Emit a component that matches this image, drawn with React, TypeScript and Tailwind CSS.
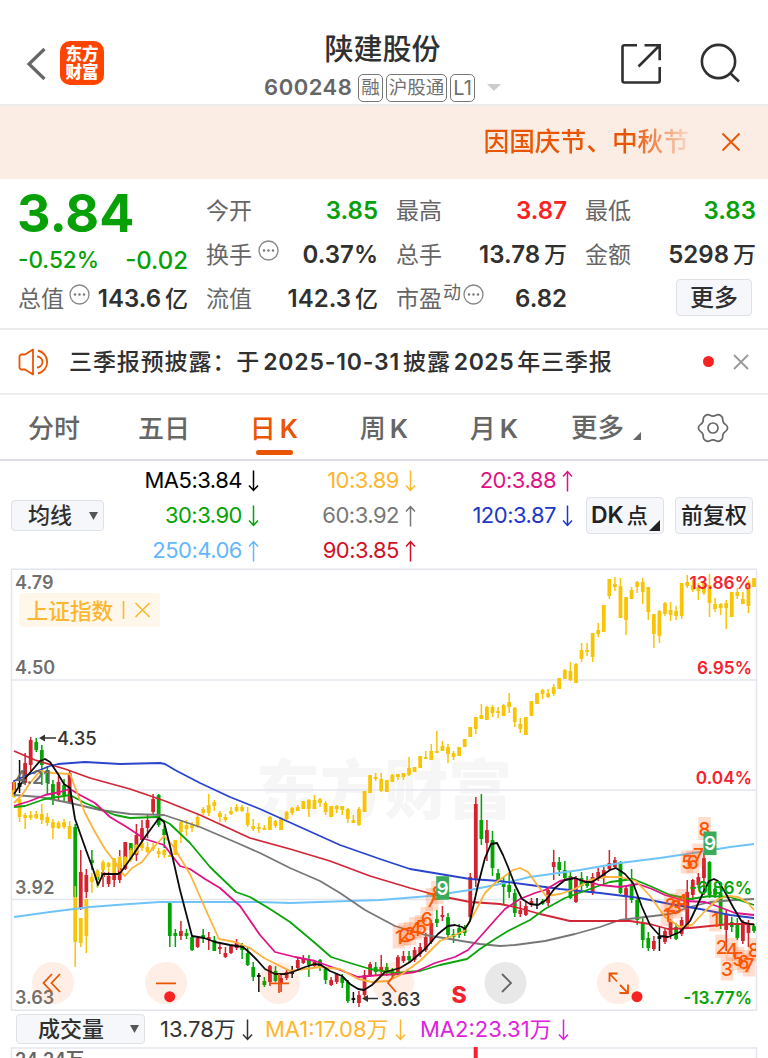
import React from 'react';
import { clsx } from 'clsx';

type Tone = 'up' | 'down' | 'flat';
type Bar = [high: number, top: number, bottom: number, low: number];

const RED = '#d2232e';
const GREEN = '#04a404';
const BLACK = '#111111';
const YELLOW = '#f9c406';

const FIRST_X = 14;
const STEP = 5.564;

const indexBars: Bar[] = [
  [782, 790, 797, 798], [798, 799, 817, 822], [813, 815, 818, 829], [811, 815, 818, 820], [811, 814, 818, 819],
  [804, 814, 820, 824], [813, 817, 823, 826], [819, 822, 828, 839], [821, 823, 828, 829], [819, 822, 827, 829],
  [821, 826, 839, 839], [886, 897, 942, 967], [918, 918, 943, 947], [899, 899, 936, 953], [873, 877, 882, 893],
  [869, 871, 877, 888], [860, 862, 870, 877], [862, 863, 867, 872], [858, 858, 873, 874], [856, 857, 868, 869],
  [856, 857, 865, 865], [848, 850, 860, 862], [844, 845, 853, 854], [842, 843, 848, 851], [842, 847, 852, 853],
  [843, 847, 849, 851], [848, 851, 854, 858], [849, 850, 855, 858], [852, 855, 857, 857], [840, 840, 855, 855],
  [820, 822, 832, 843], [820, 825, 829, 836], [822, 825, 828, 832], [815, 817, 827, 828], [807, 809, 813, 815],
  [794, 805, 813, 816], [800, 802, 806, 811], [811, 813, 817, 822], [814, 817, 820, 822], [807, 811, 814, 815],
  [804, 807, 811, 812], [805, 807, 811, 812], [807, 813, 825, 827], [819, 826, 829, 831], [823, 827, 829, 833],
  [825, 828, 830, 830], [816, 817, 830, 830], [820, 821, 826, 828], [817, 818, 830, 830], [811, 812, 819, 820],
  [807, 808, 813, 815], [805, 807, 811, 811], [801, 801, 809, 809], [799, 800, 809, 817], [795, 800, 809, 809],
  [798, 799, 803, 807], [801, 803, 812, 815], [806, 806, 817, 817], [805, 806, 809, 813], [806, 806, 810, 815],
  [808, 809, 819, 823], [815, 820, 823, 823], [807, 809, 825, 826], [791, 791, 812, 812], [775, 775, 793, 793],
  [773, 777, 779, 781], [773, 779, 791, 792], [780, 780, 792, 792], [774, 775, 782, 782], [774, 774, 777, 780],
  [773, 773, 777, 780], [757, 768, 775, 776], [767, 767, 772, 772], [756, 756, 768, 768], [751, 757, 759, 759],
  [744, 751, 760, 760], [731, 751, 753, 753], [741, 746, 751, 751], [744, 747, 754, 763], [751, 753, 757, 760],
  [747, 747, 756, 756], [739, 739, 747, 747], [727, 727, 737, 737], [717, 717, 729, 734], [704, 715, 719, 719],
  [706, 707, 720, 720], [705, 707, 713, 717], [707, 711, 713, 718], [704, 705, 716, 716], [693, 702, 707, 713],
  [707, 708, 722, 727], [718, 724, 729, 733], [717, 717, 735, 735], [701, 701, 716, 716], [693, 693, 704, 704],
  [689, 690, 694, 699], [689, 693, 697, 698], [684, 687, 694, 696], [678, 678, 689, 689], [669, 670, 679, 679],
  [662, 671, 680, 681], [663, 664, 683, 683], [643, 650, 659, 662], [643, 650, 652, 656], [633, 633, 657, 662],
  [623, 630, 634, 637], [605, 605, 632, 632], [579, 579, 596, 599], [577, 584, 587, 591], [578, 586, 618, 618],
  [597, 597, 620, 635], [587, 590, 599, 599], [581, 582, 587, 593], [578, 582, 592, 604], [587, 587, 612, 620],
  [614, 614, 634, 648], [610, 611, 636, 643], [602, 603, 614, 616], [602, 610, 615, 621], [606, 611, 616, 620],
  [583, 583, 616, 619], [575, 582, 586, 588], [580, 585, 590, 592], [583, 587, 591, 600], [580, 582, 593, 595],
  [574, 585, 603, 617], [598, 604, 609, 612], [603, 604, 608, 615], [600, 603, 608, 629], [592, 592, 617, 617],
  [588, 592, 596, 599], [592, 599, 604, 604], [580, 582, 606, 613], [578, 578, 587, 587],
];

const stockBars: Bar[] = [
  [780, 782, 795, 797], [760, 783, 787, 793], [753, 763, 783, 785], [737, 740, 765, 772], [738, 742, 750, 752],
  [745, 750, 765, 785], [766, 770, 783, 795], [780, 784, 800, 805], [776, 782, 795, 800], [779, 785, 795, 801],
  [771, 773, 802, 804],
  [824, 827, 897, 897], [850, 872, 909, 910], [869, 875, 892, 898], [850, 860, 863, 870], [870, 874, 880, 887],
  [869, 872, 877, 887], [872, 876, 884, 887], [870, 875, 880, 887], [850, 863, 880, 883], [842, 842, 869, 870],
  [843, 843, 857, 860], [824, 835, 855, 861], [820, 828, 840, 843], [815, 820, 828, 838], [794, 799, 812, 814],
  [794, 795, 825, 827], [825, 829, 835, 848],
  [903, 903, 936, 947], [929, 933, 936, 947], [921, 931, 936, 940], [929, 933, 936, 939], [935, 937, 950, 951],
  [938, 938, 947, 948], [929, 935, 938, 943], [932, 937, 940, 950], [936, 940, 951, 951], [944, 947, 949, 954],
  [947, 953, 957, 958], [945, 946, 953, 954], [939, 942, 948, 950], [943, 945, 950, 959], [947, 953, 965, 966],
  [962, 967, 977, 981], [973, 975, 977, 992], [977, 981, 985, 987], [965, 966, 982, 986], [966, 971, 981, 982],
  [973, 978, 984, 992], [970, 972, 978, 980], [966, 972, 974, 978], [957, 960, 968, 969], [955, 958, 963, 964],
  [955, 960, 965, 977], [960, 962, 966, 968], [959, 960, 967, 971], [967, 968, 980, 984], [977, 980, 985, 986],
  [973, 974, 982, 984], [974, 977, 983, 988], [980, 982, 1001, 1003],
  [992, 998, 1000, 1003], [991, 995, 1003, 1007], [970, 975, 995, 997], [962, 964, 975, 977], [962, 967, 972, 975],
  [955, 967, 970, 975], [963, 967, 973, 976], [968, 970, 975, 977], [955, 957, 972, 974], [951, 956, 961, 963],
  [951, 956, 960, 963], [947, 950, 960, 962], [943, 947, 954, 957], [933, 937, 950, 952], [920, 923, 942, 944],
  [910, 919, 923, 927], [906, 915, 917, 921], [913, 917, 935, 939], [929, 934, 937, 943], [924, 928, 935, 938],
  [925, 929, 933, 936],
  [873, 877, 917, 920], [797, 804, 880, 887], [794, 820, 839, 845], [820, 830, 843, 861], [831, 840, 868, 876],
  [869, 873, 880, 883], [877, 882, 887, 905], [872, 885, 892, 898], [889, 893, 913, 917], [901, 910, 914, 917],
  [902, 906, 915, 916], [898, 901, 904, 907], [898, 904, 905, 909], [899, 901, 904, 905],
  [887, 890, 903, 906], [850, 862, 867, 880], [857, 862, 870, 876], [861, 870, 878, 881], [872, 876, 898, 899],
  [876, 878, 902, 903], [872, 878, 886, 890], [876, 881, 886, 888], [873, 877, 893, 895], [868, 872, 878, 881],
  [867, 870, 877, 884], [850, 863, 869, 871], [857, 860, 867, 869], [861, 862, 893, 894], [886, 888, 896, 921],
  [869, 884, 900, 903], [897, 900, 920, 925], [918, 923, 940, 948],
  [932, 938, 948, 951], [936, 941, 949, 951], [927, 936, 939, 951], [929, 931, 942, 944], [919, 922, 935, 939],
  [923, 927, 939, 940], [917, 920, 934, 936], [880, 892, 928, 929], [879, 880, 895, 900], [873, 877, 885, 888],
  [853, 858, 878, 895], [861, 862, 895, 898], [886, 889, 895, 898],
  [882, 893, 925, 929], [909, 915, 930, 951], [917, 922, 927, 932], [918, 923, 938, 940], [920, 924, 941, 944],
  [920, 925, 933, 947], [924, 926, 931, 933],
];

// one letter per stock bar: r = rise, g = fall, k = unchanged
const stockTones = [
  'rkrrggggrgr',
  'grrggrrrrrgrrrrgg',
  'ggrggrgrgrrrrgg',
  'gkgrgrrkrrgrggrrgg',
  'krrrgrggrrgrrrrgrgggg',
  'rrgrgggggrrrk',
  'grrgggrggrrrrrgrggggrkrrgrrrrrgggrggrrg',
].join('');

const toneColors: Record<string, string> = { r: RED, g: GREEN, k: BLACK };

const averages = [
  { color: '#6fc3f8', points: '14,917 50,912 90,907 130,904 160,902 200,902 260,902 290,903 320,902 380,900 430,896 470,890 500,884 530,877 580,870 620,863 660,858 700,852 730,847 754,844' },
  { color: '#777777', points: '14,795 40,797 70,803 100,810 130,814 164,815 200,827 235,842 260,853 290,868 320,881 340,893 365,910 395,926 425,935 450,939 480,944 500,946 515,945 545,941 575,934 600,927 620,920 645,917 670,914 690,907 710,902 735,900 754,899' },
  { color: '#d22637', points: '14,751 35,760 65,769 90,778 130,789 165,801 200,815 250,838 290,849 330,861 370,876 410,888 440,896 470,902 500,904 515,907 540,914 570,921 600,921 630,921 650,924 668,929 690,928 710,926 730,924 754,924' },
  { color: '#2a44cc', points: '14,781 30,774 50,766 58,764 85,762 120,764 160,763 165,764 175,770 200,783 230,797 260,809 300,827 340,845 380,859 410,869 440,874 470,879 500,881 530,885 560,889 600,893 640,898 670,904 700,909 730,915 754,918' },
  { color: '#0aa50a', points: '14,807 25,806 45,799 70,795 85,803 100,809 115,815 130,818 157,817 170,824 190,843 210,867 236,892 250,897 270,909 290,922 315,943 331,957 350,963 370,969 395,973 420,971 440,965 467,959 480,949 495,939 508,931 530,920 545,909 565,898 590,889 610,882 633,879 650,886 670,895 690,899 710,896 730,897 754,905' },
  { color: '#e01286', points: '14,806 30,801 45,795 60,792 70,789 80,795 95,803 110,817 125,826 145,839 164,845 180,866 190,869 205,879 220,888 240,906 260,935 275,952 295,957 315,961 340,970 358,977 380,975 400,974 415,972 435,963 455,957 468,950 480,937 495,920 505,909 520,899 535,893 545,890 560,881 573,878 585,881 600,885 620,887 638,884 652,889 665,895 685,901 705,902 722,908 735,913 754,915' },
  { color: '#fdb33c', points: '14,803 22,795 30,783 40,771 53,773 70,774 78,795 85,813 95,832 105,849 115,862 120,871 125,876 132,868 142,862 152,849 164,836 173,846 190,874 205,908 219,939 235,942 250,948 264,958 278,965 290,971 320,967 340,969 358,979 372,982 388,981 402,974 420,961 440,941 455,935 464,931 475,912 485,893 495,883 505,876 513,870 520,868 528,872 538,886 546,896 560,894 575,889 590,880 605,877 620,877 636,881 650,896 665,917 680,927 692,925 705,911 718,899 728,896 738,897 748,903 754,910' },
  { color: '#0b0b0b', points: '14,794 20,785 28,775 40,761 45,759 50,762 58,774 64,784 70,788 75,819 86,850 93,869 98,885 103,874 118,874 121,872 131,858 145,837 159,818 164,822 170,846 180,890 192,936 204,938 215,942 230,945 243,947 250,953 257,960 265,969 275,974 286,974 295,971 305,967 315,964 321,965 330,971 342,976 350,984 358,989 364,990 372,985 385,972 400,968 410,962 425,949 438,934 448,926 455,925 462,927 465,929 470,921 478,885 485,858 491,844 497,843 503,855 508,867 515,885 522,899 530,904 538,905 546,900 555,888 565,880 575,878 585,882 592,882 600,877 610,870 616,868 625,874 633,883 642,907 650,925 660,936 668,937 680,932 690,921 697,906 703,893 709,881 714,879 718,881 725,892 733,907 742,922 754,925' },
];

const signals: [string, number, number][] = [
  ['1', 399, 937.5], ['2', 404.5, 935], ['3', 410, 934], ['4', 415.5, 929], ['5', 421, 927], ['6', 426.7, 919], ['7', 432, 900], ['8', 437.5, 893],
  ['1', 667, 915], ['2', 670.5, 905], ['3', 676, 907.5], ['4', 682, 901], ['5', 687, 862.5], ['6', 692.7, 862.5], ['7', 698.5, 855.5], ['8', 704.5, 829],
  ['1', 715.5, 920.5], ['2', 721.5, 946.7], ['3', 727, 969.5], ['4', 732, 950], ['5', 738, 959], ['6', 743.5, 962], ['7', 749, 965.5], ['8', 754, 950],
];

function Candles({ bars, color }: { bars: Bar[]; color: (i: number) => string }) {
  return (
    <g>
      {bars.map(([high, top, bottom, low], i) => {
        const x = FIRST_X + i * STEP;
        return (
          <g key={i} fill={color(i)}>
            <rect x={x - 0.75} y={high} width={1.5} height={low - high} />
            <rect x={x - 1.9} y={top} width={3.8} height={bottom - top} rx={0.6} />
          </g>
        );
      })}
    </g>
  );
}

function Arrow({ up }: { up?: boolean }) {
  return (
    <svg width="11" height="22" viewBox="0 0 11 22" fill="none" stroke="currentColor" strokeWidth="1.5" className={clsx('ml-[6px] shrink-0', up && 'rotate-180')}>
      <path d="M5.5 .5v20M1 15.5l4.5 5 4.5-5" />
    </svg>
  );
}

function Dots() {
  return (
    <svg width="21" height="21" viewBox="0 0 21 21" className="shrink-0">
      <circle cx="10.5" cy="10.5" r="9.5" fill="none" stroke="#888" strokeWidth="1.3" />
      <g fill="#777">
        <circle cx="6" cy="10.5" r="1.2" />
        <circle cx="10.5" cy="10.5" r="1.2" />
        <circle cx="15" cy="10.5" r="1.2" />
      </g>
    </svg>
  );
}

function Quote({ label, value, unit, tone = 'flat', extra }: { label: string; value: string; unit?: string; tone?: Tone; extra?: React.ReactNode }) {
  return (
    <div className="flex h-11 items-center">
      <span className="text-[23px] text-[#666]">{label}</span>
      {extra}
      <span
        className={clsx(
          'ml-auto flex items-center gap-[4px] text-[24px] font-semibold',
          tone === 'up' && 'text-[#fb2222]',
          tone === 'down' && 'text-[#07a007]',
          tone === 'flat' && 'text-[#303030]',
        )}
      >
        {value}
        {unit && <span className="text-[23px] font-medium">{unit}</span>}
      </span>
    </div>
  );
}

function MaItem({ className, text, up }: { className: string; text: string; up?: boolean }) {
  return (
    <div className={clsx('flex h-[35px] items-center justify-end text-[22px] tracking-[-0.5px]', className)}>
      {text}
      <Arrow up={up} />
    </div>
  );
}

function Header() {
  return (
    <header className="flex h-[106px] border-b-2 border-[#ececec] pt-[30px]">
      <div className="flex w-[198px] items-start pl-[25px] pt-[11px]">
        <svg width="22" height="44" viewBox="0 0 22 44" fill="none" stroke="#666" strokeWidth="3.2">
          <path d="M19.5 8 4 23l15.5 15" />
        </svg>
        <div className="ml-[13px] flex h-[44px] w-[44px] flex-col items-center justify-center rounded-[10px] bg-[#ff4400] text-[16.500px] leading-[18px] font-black text-white">
          <span>东方</span>
          <span>财富</span>
        </div>
      </div>
      <div className="flex w-[369px] flex-col items-center">
        <h1 className="h-[38px] text-[29px] leading-[39px] font-medium text-[#303030]">陕建股份</h1>
        <div className="mt-[4px] flex h-[31px] items-center gap-[3px] text-[20px] text-[#707070]">
          <span className="mr-[3px] text-[22px] font-semibold tracking-[0.5px] text-[#666]">600248</span>
          <span className="flex h-[28px] items-center rounded-[5px] border border-[#777] px-[2px] text-[18.500px]">融</span>
          <span className="flex h-[28px] items-center rounded-[5px] border border-[#777] px-[2px] text-[18.500px]">沪股通</span>
          <span className="flex h-[28px] items-center rounded-[5px] border border-[#777] px-[2px] text-[20px]">L1</span>
          <svg width="14" height="7" viewBox="0 0 14 7" className="ml-[9px]">
            <path d="M0 0h14L7 7z" fill="#ccc" />
          </svg>
        </div>
      </div>
      <div className="flex flex-1 items-start gap-[37px] pl-[53px] pt-[13px]">
        <svg width="42" height="42" viewBox="0 0 42 42" fill="none" stroke="#303030" strokeWidth="2.6">
          <path d="M17 2.3H4.500a2 2 0 0 0-2 2v33.200a2 2 0 0 0 2 2h33.200a2 2 0 0 0 2-2V24M24.500 2.300h15.200v15M39 3 18.500 23.500" />
        </svg>
        <svg width="42" height="42" viewBox="0 0 42 42" fill="none" stroke="#303030" strokeWidth="2.6">
          <circle cx="19.5" cy="18.500" r="16.600" />
          <path d="m31 30 9 8.500" />
        </svg>
      </div>
    </header>
  );
}

function Banner() {
  return (
    <div className="flex h-[73px] items-center justify-end bg-[#fbede4] pr-[27px]">
      <span className="bg-linear-to-r from-[#ea5504] from-72% to-[#ea550420] to-100% bg-clip-text text-[25.700px] font-medium text-transparent">因国庆节、中秋节</span>
      <svg width="20" height="20" viewBox="0 0 20 20" fill="none" stroke="#ea5504" strokeWidth="1.9" className="mb-[2px] ml-[32px]">
        <path d="m1.500 1.500 17 17M18.500 1.500l-17 17" />
      </svg>
    </div>
  );
}

function Quotes() {
  return (
    <section className="grid h-[151px] grid-cols-[170px_172px_171px_171px] gap-x-[18px] border-b-2 border-[#ececec] pl-[18px] pt-[10px]">
      <div>
        <div className="-ml-px h-[52px] text-[52px] leading-[50px] font-bold text-[#07a007]">3.84</div>
        <div className="flex h-[36px] items-center justify-between font-medium text-[#07a007]">
          <span className="pt-[2px] text-[22.500px]">-0.52%</span>
          <span className="pt-[4px] text-[24px]">-0.02</span>
        </div>
        <Quote label="总值" value="143.6" unit="亿" extra={<span className="mb-[9px] ml-[5px]"><Dots /></span>} />
      </div>
      <div>
        <Quote label="今开" value="3.85" tone="down" />
        <Quote label="换手" value="0.37%" extra={<span className="mb-[9px] ml-[6px]"><Dots /></span>} />
        <Quote label="流值" value="142.3" unit="亿" />
      </div>
      <div>
        <Quote label="最高" value="3.87" tone="up" />
        <Quote label="总手" value="13.78" unit="万" />
        <Quote
          label="市盈"
          value="6.82"
          extra={
            <>
              <span className="mb-[14px] ml-px text-[18px] text-[#666]">动</span>
              <span className="mb-[9px] ml-[2px]"><Dots /></span>
            </>
          }
        />
      </div>
      <div>
        <Quote label="最低" value="3.83" tone="down" />
        <Quote label="金额" value="5298" unit="万" />
        <div className="flex h-11 items-center justify-end pr-[4px] pb-[4px]">
          <button className="h-[37px] w-[76px] rounded-[4px] border border-[#dfe1e8] bg-[#f6f7fa] text-[24px] leading-[36px] font-medium text-[#303030]">更多</button>
        </div>
      </div>
    </section>
  );
}

function News() {
  return (
    <div className="flex h-[65px] items-center border-b-2 border-[#ececec] pl-[18px] pr-[19px]">
      <svg width="32" height="28" viewBox="0 0 32 28" fill="none" stroke="#ea5504" strokeWidth="1.8" strokeLinejoin="round">
        <path d="M3.500 6.500H7L15 1.500v25l-8-5H3.500a2 2 0 0 1-2-2v-11a2 2 0 0 1 2-2zM19 8.500a5.500 5.500 0 0 1 0 11M20 2.500a11.800 11.800 0 0 1 0 23" />
      </svg>
      <p className="ml-[19px] pt-px text-[23px] font-medium tracking-[0.9px] whitespace-nowrap text-[#303030]">
        三季报预披露：于<span className="mx-[3px] font-semibold tracking-[0.8px]">2025-10-31</span>披露<span className="mx-[3px] font-semibold tracking-[0.5px]">2025</span>年三季报
      </p>
      <span className="ml-auto h-[11px] w-[11px] rounded-full bg-[#f82222]" />
      <svg width="16" height="16" viewBox="0 0 16 16" fill="none" stroke="#999" strokeWidth="1.8" className="ml-[19px]">
        <path d="m1 1 14 14M15 1 1 15" />
      </svg>
    </div>
  );
}

const tabs = ['分时', '五日', '日K', '周K', '月K'];

function Tabs() {
  return (
    <nav className="flex h-[66px] border-b-2 border-[#dddde4] text-[26px] font-medium text-[#666]">
      {tabs.map((tab) => {
        const active = tab === '日K';
        return (
          <div key={tab} className={clsx('flex w-[110px] flex-col items-center pt-[11px] pr-[2px]', active && 'text-[#ea5504]')}>
            <span className="flex h-[44px] items-center gap-[4px] pt-px">
              {tab.replace('K', '')}
              {tab.endsWith('K') && <span className="font-semibold">K</span>}
            </span>
            {active && <span className="h-[5px] w-[37px] rounded-full bg-[#ea5504]" />}
          </div>
        );
      })}
      <div className="flex w-[110px] items-center justify-center pt-px pl-[2px]">
        <span className="text-[26.500px]">更多</span>
        <svg width="8" height="8" viewBox="0 0 8 8" className="mt-[17px] ml-[9px]">
          <path d="M8 0v8H0z" fill="#666" />
        </svg>
      </div>
      <div className="flex w-[106px] items-center justify-center pt-px">
        <svg width="32" height="32" viewBox="0 0 32 32" fill="none" stroke="#666" strokeWidth="1.7" strokeLinejoin="round">
          <path d="M11 2.700c1.500 0 2.500 1.400 5 1.400s3.500-1.400 5-1.400c1.800 0 4.300 1.700 4.600 3.500.3 1.600-.3 2.500 1 4.600 1.200 1.900 4 1.900 4 5.200s-2.800 3.300-4 5.200c-1.300 2.100-.7 3-1 4.600-.3 1.800-2.800 3.500-4.600 3.500-1.500 0-2.500-1.400-5-1.400s-3.500 1.400-5 1.400c-1.800 0-4.300-1.700-4.600-3.500-.3-1.600.3-2.500-1-4.600-1.200-1.900-4-1.900-4-5.200s2.800-3.300 4-5.200c1.300-2.100.7-3 1-4.600.3-1.800 2.800-3.500 4.600-3.500z" />
          <circle cx="16" cy="16" r="5" />
        </svg>
      </div>
    </nav>
  );
}

function Averages() {
  return (
    <section className="flex h-[107px] items-start pl-[11px]">
      <div className="mt-[39px] flex h-[31px] w-[93px] items-center justify-between rounded-[4px] border border-[#dfe1e8] bg-[#f6f7fa] pr-[5px] pl-[16px] text-[22px] font-medium text-[#303030]">
        均线
        <svg width="9" height="8" viewBox="0 0 9 8"><path d="M0 0h9L4.500 8z" fill="#555" /></svg>
      </div>
      <div className="grid w-[469px] grid-cols-[155px_157px_157px] pt-[2px]">
        <MaItem className="text-black" text="MA5:3.84" />
        <MaItem className="text-[#fdb62f]" text="10:3.89" />
        <MaItem className="text-[#e01286]" text="20:3.88" up />
        <MaItem className="text-[#04a404]" text="30:3.90" />
        <MaItem className="text-[#777]" text="60:3.92" up />
        <MaItem className="text-[#2138c4]" text="120:3.87" />
        <MaItem className="text-[#63b8fb]" text="250:4.06" up />
        <MaItem className="text-[#cf1126]" text="90:3.85" up />
      </div>
      <div className="mt-[36px] ml-[13px] flex h-[37px] w-[78px] items-center rounded-[4px] border border-[#dfe1e8] bg-[#f6f7fa] pl-[4px] text-[23px] font-semibold text-[#222]">
        DK<span className="ml-[3px] text-[21px] font-medium">点</span>
        <svg width="11" height="11" viewBox="0 0 11 11" className="mt-[20px] ml-px"><path d="M11 0v11H0z" fill="#222" /></svg>
      </div>
      <div className="mt-[36px] ml-[11px] flex h-[37px] w-[78px] items-center justify-center rounded-[4px] border border-[#dfe1e8] bg-[#f6f7fa] text-[22px] font-medium text-[#222]">前复权</div>
    </section>
  );
}

function KLineChart() {
  return (
    <svg width="768" height="443" viewBox="0 568 768 443" className="block" fontWeight="500">
      <defs>
        <clipPath id="plot"><rect x="11" y="568" width="745" height="443" /></clipPath>
      </defs>
      <text x="256" y="813" fontSize="64" fontWeight="900" fill="#f6f6f7">东方财富</text>
      <g stroke="#e4e6ed" strokeWidth="1.5" fill="none">
        <path d="M11.500 569.200h745V1010.200h-745z" />
        <path d="M12 680h744M12 790h744M12 899.500h744" />
      </g>
      <circle cx="505.500" cy="983" r="21" fill="#e8e8e8" />

      <Candles bars={stockBars} color={(i) => toneColors[stockTones[i]]} />
      <Candles bars={indexBars} color={() => YELLOW} />

      <g fill="none" strokeWidth="1.8" strokeLinejoin="round">
        {averages.map((line) => <polyline key={line.color} points={line.points} stroke={line.color} />)}
      </g>

      <g fontSize="18" fontWeight="600" fill="#666" fillOpacity=".95">
        <text x="15" y="589">4.79</text>
        <text x="15" y="674">4.50</text>
        <text x="15" y="784">4.21</text>
        <text x="15" y="894">3.92</text>
        <text x="15" y="1004">3.63</text>
      </g>

      <g fill="#f46414" fillOpacity=".11">
        {[53, 166, 279, 393, 618].map((cx) => <circle key={cx} cx={cx} cy="983" r="21" />)}
      </g>

      <g stroke="#333" strokeWidth="1.5" fill="#333">
        <path d="M42 738h14M366 998.500h12" />
        <path d="m39 738 6-3.500v7zM362 998.500l6-3.500v7z" stroke="none" />
      </g>
      <g fontSize="18.5" fill="#333">
        <text x="57" y="745">4.35</text>
        <text x="381" y="1006">3.63</text>
      </g>

      <g clipPath="url(#plot)" fontSize="19" textAnchor="middle">
        {signals.map(([digit, x, y]) => <rect key={digit + x} x={x - 6.3} y={y - 12} width="12.6" height="23" fill="#ff5a10" fillOpacity=".2" />)}
        {signals.map(([digit, x, y]) => <text key={digit + x} x={x} y={y + 6.8} fill="#ff5500">{digit}</text>)}
        {[[442.7, 888], [710, 843.3]].map(([x, y]) => (
          <g key={x}>
            <rect x={x - 6.5} y={y - 11.8} width="13" height="23.6" fill="#3aab5b" />
            <text x={x} y={y + 7} fill="#fff" fontWeight="600">9</text>
          </g>
        ))}
      </g>

      <g fontSize="17.3" fontWeight="600" textAnchor="end" fill="#f5222d">
        <text x="752" y="589">13.86%</text>
        <text x="752" y="673.500">6.95%</text>
        <text x="752" y="783.500">0.04%</text>
        <text x="752" y="893.500" fill={GREEN}>-6.86%</text>
        <text x="752" y="1003.500" fill={GREEN}>-13.77%</text>
      </g>
      <text x="451.5" y="1002.500" fontSize="23" fontWeight="800" fill="#f5222d">S</text>

      <g fill="none" stroke="#ea5504" strokeWidth="1.8">
        <path d="m52 974-8.500 9 8.500 9M60 974l-8.500 9 8.500 9" />
        <path d="M156 983.300h20M269 983.300h20M279 974v19M395 974l-7 9 8 9" />
        <path d="M609.500 982v-8.500h8M609.500 973.500l7.500 8M628 984.500v8.500h-8.500M628 993l-8-8" />
      </g>
      <path d="m502 974 9 9-9 9" fill="none" stroke="#666" strokeWidth="1.9" />
      <circle cx="169.7" cy="996.7" r="5.5" fill="#f82222" />
      <circle cx="637" cy="996.7" r="5.5" fill="#f82222" />

      <rect x="19" y="593" width="141" height="34" rx="3" fill="#fff7ea" />
      <text x="26.5" y="618.500" fontSize="21.7" fill="#fdb62f">上证指数</text>
      <path d="M123.500 601v18M135.500 603l14 14M149.500 603l-14 14" stroke="#fdb62f" strokeWidth="1.6" />
    </svg>
  );
}

function Volume() {
  return (
    <section>
      <div className="flex h-[36px] items-center pl-[16px] text-[22px]">
        <div className="flex h-[30px] w-[129px] items-center justify-between rounded-[4px] border border-[#dfe1e8] bg-[#f6f7fa] pr-[5px] pl-[21px] font-medium text-[#303030]">
          成交量
          <svg width="9" height="8" viewBox="0 0 9 8"><path d="M0 0h9L4.500 8z" fill="#555" /></svg>
        </div>
        <div className="ml-[15px] flex w-[105px] items-center pt-px text-[#333]">13.78万<Arrow /></div>
        <div className="flex w-[155px] items-center pt-px text-[#fdb62f]">MA1:17.08万<Arrow /></div>
        <div className="flex items-center pt-px text-[#dd22dd]">MA2:23.31万<Arrow /></div>
      </div>
      <svg width="768" height="11" viewBox="0 1047 768 11" className="block">
        <path d="M11.500 1060v-12h745v12" fill="none" stroke="#e4e6ed" strokeWidth="1.5" />
        <text x="15" y="1065.500" fontSize="18" fontWeight="600" fill="#666">24.24万</text>
        <rect x="473.700" y="1047" width="4" height="12" fill="#f5222d" />
      </svg>
    </section>
  );
}

export default function App() {
  return (
    <div className="h-[1058px] w-[768px] overflow-hidden bg-white font-['Inter','Noto_Sans_CJK_SC',sans-serif]">
      <Header />
      <Banner />
      <Quotes />
      <News />
      <Tabs />
      <Averages />
      <KLineChart />
      <Volume />
    </div>
  );
}
